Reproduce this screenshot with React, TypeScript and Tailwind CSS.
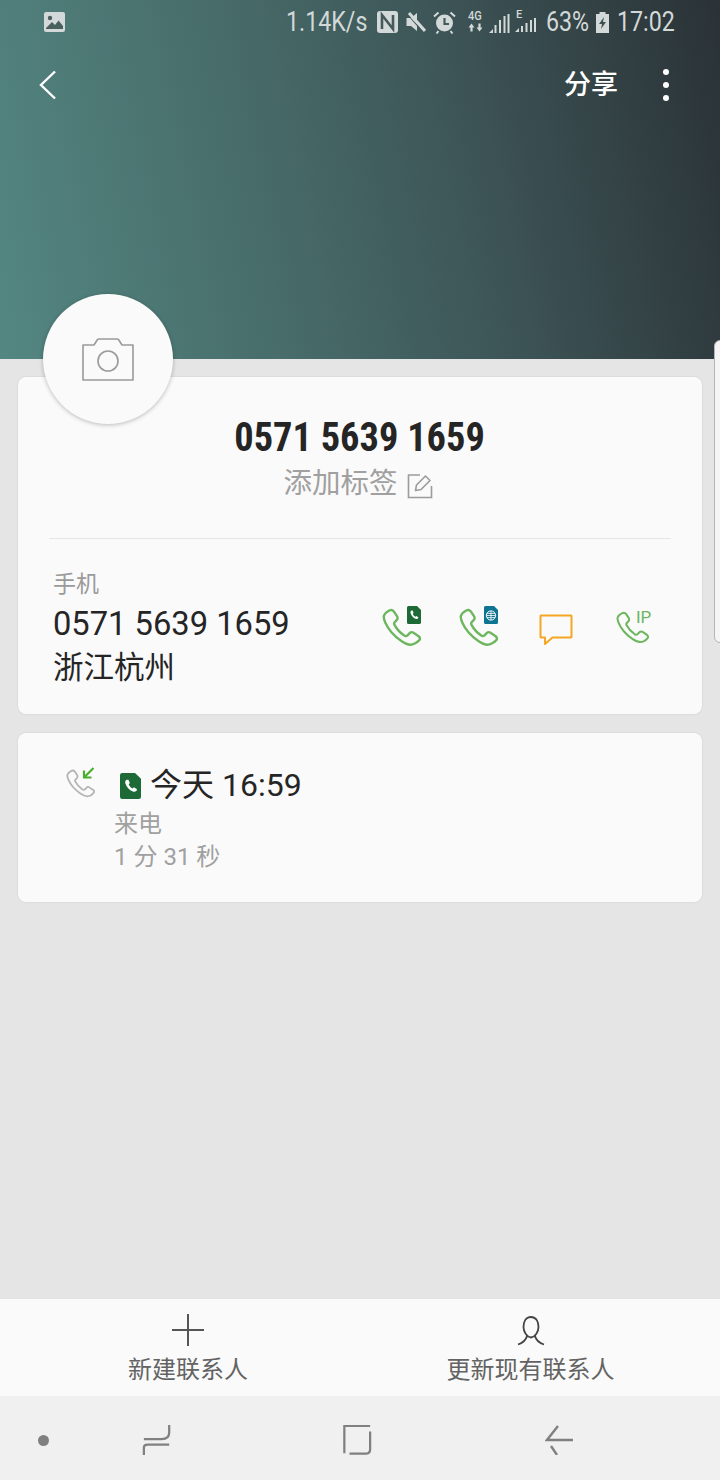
import React from "react";

const FONT = "font-['Roboto','Noto_Sans_CJK_SC',sans-serif]";

const PHONE =
  "M6.2 1.6 C4.6 2.4 2.2 4.4 1.6 6.2 C1 8.4 3.4 14.6 8 20 C13 25.8 20 30.4 24 30.6 C26.4 30.6 30 28.6 31.6 26.6 C32.6 25.2 32.2 24.4 31 23.4 L26.6 20.4 C25.4 19.6 24.4 19.8 23.4 20.8 L21.6 22.6 C20.6 23.4 19.8 23.4 18.8 22.8 C15.6 20.6 12.4 17.2 10.6 13.8 C10 12.8 10.2 12 11 11.2 L12.4 9.8 C13.4 8.8 13.4 7.8 12.8 6.6 L10 2.4 C9 1.2 7.6 0.9 6.2 1.6 Z";

function Phone({ size, color, width = 2 }: { size: number; color: string; width?: number }) {
  return (
    <svg width={size} height={size} viewBox="0 0 33 32" fill="none" className="block">
      <path d={PHONE} stroke={color} strokeWidth={width} strokeLinejoin="round" />
    </svg>
  );
}

// SIM-card shape with a clipped top-right corner
function Sim({ w, h, color, children }: { w: number; h: number; color: string; children?: React.ReactNode }) {
  return (
    <svg width={w} height={h} viewBox="0 0 14 18" preserveAspectRatio="none" className="block">
      <path d="M1.5 0 H10 L14 4 V16.5 A1.5 1.5 0 0 1 12.5 18 H1.5 A1.5 1.5 0 0 1 0 16.5 V1.5 A1.5 1.5 0 0 1 1.5 0 Z" fill={color} />
      {children}
    </svg>
  );
}

const SIM_PHONE = (
  <path d="M4.6 4.6 C3.6 5 3.2 6 3.6 7.2 C4.3 9.6 6.2 11.8 8.6 12.8 C9.8 13.2 10.8 12.9 11.2 12 L11.3 11.2 L9.3 9.9 L8.3 10.7 C7.2 10.2 6.2 9 5.8 7.8 L6.6 6.9 L5.6 4.6 Z" fill="#fff" />
);

function StatusIcons() {
  const ink = "#d3d9d8";
  return (
    <div className="flex items-center">
      {/* NFC */}
      <svg width="21" height="22" viewBox="0 0 21 22" className="block ml-[10px]">
        <rect width="21" height="22" rx="3" fill={ink} />
        <path d="M5 18 V4 L16 18 V4" fill="none" stroke="#465a5b" strokeWidth="2.6" />
      </svg>
      {/* Muted speaker */}
      <svg width="20" height="22" viewBox="0 0 20 22" className="block ml-[8px]">
        <path d="M0.5 7 H5 L11 2 V13 L5 7 Z M0.5 7 H4 L11 15 V20 L5 15 H0.5 Z" fill={ink} />
        <path d="M3 2 L19 20" stroke={ink} strokeWidth="3" />
      </svg>
      {/* Alarm clock */}
      <svg width="23" height="23" viewBox="0 0 23 23" className="block ml-[7px]">
        <circle cx="11.5" cy="12" r="8.5" fill={ink} />
        <path d="M11.5 7 V13 H16" fill="none" stroke="#465a5b" strokeWidth="2.2" />
        <path d="M1 5.5 L5.5 1.5 M22 5.5 L17.5 1.5 M5.5 20 L3.5 22.5 M17.5 20 L19.5 22.5" stroke={ink} strokeWidth="2" />
      </svg>
      {/* 4G and signal */}
      <div className="relative ml-[12px] h-[24px] w-[20px]">
        <span className="absolute left-0 top-[-1px] origin-top-left scale-x-[0.85] text-[13px] font-medium leading-[14px] text-[#d3d9d8]">4G</span>
        <svg width="16" height="10" viewBox="0 0 16 9" className="absolute left-0 top-[13px]">
          <path d="M3.5 0 L6.5 4 H4.6 V8 H2.4 V4 H0.5 Z M11.5 8 L8.5 4 H10.4 V0 H12.6 V4 H14.5 Z" fill={ink} />
        </svg>
      </div>
      <svg width="21" height="20" viewBox="0 0 21 20" className="ml-px mt-[2px] block">
        <path d="M0 20 L4 16 V20 Z" fill={ink} />
        <path d="M6.5 20 V12 M11 20 V7 M15.5 20 V3 M19.5 20 V1" stroke={ink} strokeWidth="2" />
      </svg>
      <div className="relative ml-[5px] h-[24px] w-[21px]">
        <span className="absolute left-[1px] top-[-1px] text-[11px] font-medium leading-[12px] text-[#d3d9d8]">E</span>
        <svg width="21" height="14" viewBox="0 0 21 14" className="absolute left-0 top-[8px]">
          <path d="M0 14 L4 10 V14 Z" fill={ink} />
          <path d="M7 14 V8 M11.5 14 V5 M16 14 V2 M20 14 V0" stroke={ink} strokeWidth="2" />
        </svg>
      </div>
    </div>
  );
}

function StatusText({ w, children, className = "" }: { w: number; children: React.ReactNode; className?: string }) {
  return (
    <span style={{ width: w }} className={`block origin-left scale-x-[0.86] whitespace-nowrap text-[27px] leading-none ${className}`}>
      {children}
    </span>
  );
}

export default function App() {
  return (
    <div className={`relative flex h-[1480px] w-[720px] flex-col overflow-hidden bg-[#e5e5e5] ${FONT}`}>
      {/* Coloured header with status bar and actions */}
      <header className="flex h-[359px] shrink-0 flex-col bg-[linear-gradient(78deg,#548782_0%,#466967_40%,#3d5456_65%,#2a3236_100%)]">
        <div className="flex h-[44px] items-center pl-[44px] pr-[46px] text-[#d3d9d8]">
          <svg width="21" height="20" viewBox="0 0 21 20" className="block">
            <rect width="21" height="20" rx="2" fill="#d3d9d8" />
            <circle cx="6" cy="6" r="2.2" fill="#49605f" />
            <path d="M2 16 L8 10 L11 13 L14.5 8.5 L19 14 V17 H2 Z" fill="#49605f" />
          </svg>
          <div className="flex-1" />
          <StatusText w={81}>1.14K/s</StatusText>
          <StatusIcons />
          <StatusText w={42} className="ml-[10px] scale-x-[0.84]">63%</StatusText>
          <svg width="15" height="21" viewBox="0 0 15 21" className="ml-[7px] block">
            <path d="M4.5 0 H10.5 V2 H14 V21 H1 V2 H4.5 Z" fill="#d3d9d8" />
            <path d="M9 5 L4 12 H7 L6 17 L11 10 H8 Z" fill="#3d5051" />
          </svg>
          <StatusText w={57} className="ml-[7px]">17:02</StatusText>
        </div>
        <div className="mt-[13px] flex h-[56px] items-center pl-[38px] pr-[51px]">
          <svg width="20" height="30" viewBox="0 0 20 30" fill="none" className="block">
            <path d="M17 1.5 L3 15 L17 28.5" stroke="#fff" strokeWidth="2.4" />
          </svg>
          <div className="flex-1" />
          <span className="text-[27px] font-medium leading-none text-white">分享</span>
          <div className="ml-[45px] flex flex-col gap-[7px]">
            <span className="size-[6px] rounded-full bg-white" />
            <span className="size-[6px] rounded-full bg-white" />
            <span className="size-[6px] rounded-full bg-white" />
          </div>
        </div>
      </header>

      {/* Contact cards */}
      <main className="flex flex-1 flex-col gap-[19px] px-[18px] pt-[18px]">
        <section className="h-[337px] rounded-[8px] bg-[#fafafa] shadow-[0_0_2px_rgba(0,0,0,0.12)]">
          <div className="flex h-[161px] flex-col items-center pt-[39px]">
            <h1 className="scale-x-[0.96] text-[40px] font-bold leading-[44px] text-[#252525] [font-stretch:condensed]">0571 5639 1659</h1>
            <div className="mt-[6px] flex items-center pr-[4px]">
              <span className="text-[28.5px] leading-[36px] text-[#a0a0a0]">添加标签</span>
              <svg width="26" height="26" viewBox="0 0 26 26" fill="none" className="ml-[9px] mt-[3px] block">
                <path d="M13 2 H1.5 V24.5 H24.5 V13" stroke="#9c9c9c" strokeWidth="1.6" />
                <path d="M8.5 17.5 L9.5 12 L18.5 3 L23 7.5 L14 16.5 Z" stroke="#9c9c9c" strokeWidth="1.6" strokeLinejoin="round" />
              </svg>
            </div>
          </div>
          <div className="mx-[31px] h-px bg-[#e6e6e6]" />
          <div className="flex pl-[35px] pr-[52px] pt-[31px]">
            <div className="flex-1">
              <div className="text-[23px] leading-[30px] text-[#9a9a9a]">手机</div>
              <div className="mt-[2px] text-[32.7px] leading-[44px] text-[#252525]">0571 5639 1659</div>
              <div className="text-[30.5px] leading-[44px] text-[#252525]">浙江杭州</div>
            </div>
            <div className="flex items-start pt-[36px]">
              <div className="relative h-[44px] w-[77px]">
                <div className="absolute left-0 top-[2px]"><Phone size={39} color="#6cb65d" /></div>
                <div className="absolute left-[25px] top-0"><Sim w={14} h={18} color="#1e6a36">{SIM_PHONE}</Sim></div>
              </div>
              <div className="relative h-[44px] w-[80px]">
                <div className="absolute left-0 top-[2px]"><Phone size={39} color="#6cb65d" /></div>
                <div className="absolute left-[25px] top-0">
                  <Sim w={14} h={18} color="#0f7491">
                    <circle cx="7" cy="9.5" r="4.6" fill="none" stroke="#fff" strokeWidth="1" />
                    <path d="M2.4 9.5 H11.6 M7 5 V14 M3 7.4 H11 M3 11.6 H11" stroke="#fff" strokeWidth="0.8" />
                  </Sim>
                </div>
              </div>
              <div className="h-[44px] w-[77px] pt-[8px]">
                <svg width="34" height="32" viewBox="0 0 34 32" fill="none" className="block">
                  <path d="M2 1.5 H32 A0.8 0.8 0 0 1 32.5 2 V23 A0.8 0.8 0 0 1 32 23.5 H13.5 L6 30 V23.5 H2 A0.8 0.8 0 0 1 1.5 23 V2 A0.8 0.8 0 0 1 2 1.5 Z" stroke="#f5a623" strokeWidth="2" strokeLinejoin="round" />
                </svg>
              </div>
              <div className="relative h-[44px] w-[34px]">
                <div className="absolute left-0 top-[5px]"><Phone size={33} color="#6cb65d" /></div>
                <span className="absolute left-[20px] top-[1px] text-[17px] leading-[20px] text-[#6cb65d]">IP</span>
              </div>
            </div>
          </div>
        </section>

        <section className="flex h-[169px] rounded-[8px] bg-[#fafafa] pl-[48px] pt-[34px] shadow-[0_0_2px_rgba(0,0,0,0.12)]">
          <div className="relative h-[30px] w-[48px] pt-[2px]">
            <Phone size={29} color="#b4b4b4" />
            <svg width="13" height="13" viewBox="0 0 13 13" fill="none" className="absolute left-[16px] top-0">
              <path d="M11.5 1 L2.5 10 M2 3.5 V10.5 H9.5" stroke="#4cae2f" strokeWidth="2.2" />
            </svg>
          </div>
          <div>
            <div className="flex h-[38px] items-center pl-[6px]">
              <Sim w={21} h={26} color="#1e6a36">{SIM_PHONE}</Sim>
              <span className="ml-[9px] -translate-y-px text-[32px] leading-[38px] text-[#252525]">今天 16:59</span>
            </div>
            <div className="mt-[3px] text-[24px] leading-[32px] text-[#a0a0a0]">来电</div>
            <div className="mt-px text-[24px] leading-[33px] text-[#a0a0a0]">1 分 31 秒</div>
          </div>
        </section>
      </main>

      {/* Bottom actions */}
      <div className="grid h-[97px] shrink-0 grid-cols-2 bg-[#fafafa]">
        <button className="flex flex-col items-center pl-[16px] pt-[15px]">
          <svg width="32" height="32" viewBox="0 0 32 32" className="block">
            <path d="M16 0 V32 M0 16 H32" stroke="#555" strokeWidth="2" />
          </svg>
          <span className="mt-[8px] text-[24px] leading-[32px] text-[#636363]">新建联系人</span>
        </button>
        <button className="flex flex-col items-center pr-[19px] pt-[17px]">
          <svg width="28" height="30" viewBox="0 0 28 30" fill="none" className="block">
            <path d="M14 1 C8.5 1 6.5 6 6.5 11 C6.5 16 10 21 14 21.5 C18 21 21.5 16 21.5 11 C21.5 6 19.5 1 14 1 Z M10 20 C9 24 5.5 27 1 28.5 M18 20 C19 24 22.5 27 27 28.5" stroke="#444" strokeWidth="1.8" />
          </svg>
          <span className="mt-[8px] text-[24px] leading-[32px] text-[#636363]">更新现有联系人</span>
        </button>
      </div>

      {/* Navigation bar */}
      <nav className="relative h-[84px] shrink-0 bg-[#f0f0f0]">
        <div className="flex h-full items-center pl-[38px] pt-[4px]">
          <span className="size-[11px] rounded-full bg-[#808080]" />
          <svg width="30" height="30" viewBox="0 0 30 32" fill="none" className="ml-[93px] block">
            <path d="M1 15 H20 Q28 15 28 8 V0 M1 32 V24 Q1 21 5 21 H28" stroke="#808080" strokeWidth="2.4" />
          </svg>
          <svg width="30" height="30" viewBox="0 0 30 32" fill="none" className="ml-[170px] block">
            <path d="M29 1 H1.5 V30 M7 30.5 H24 Q29 30.5 29 26 V7" stroke="#808080" strokeWidth="2.4" />
          </svg>
          <svg width="28" height="30" viewBox="0 0 28 30" fill="none" className="ml-[173px] block">
            <path d="M13 1 L2 15 H28 M6 21 L12 30" stroke="#808080" strokeWidth="2.4" />
          </svg>
        </div>
      </nav>

      {/* Floating camera avatar */}
      <div className="absolute left-[43px] top-[294px] flex size-[130px] items-center justify-center rounded-full bg-[#fafafa] shadow-[0_1px_4px_rgba(0,0,0,0.25)]">
        <svg width="52" height="43" viewBox="0 0 52 43" fill="none" className="block">
          <path d="M1 7 H12 L15.5 1.5 Q16 1 17 1 H35 Q36 1 36.5 1.5 L40 7 H51 V42 H1 Z" stroke="#9a9a9a" strokeWidth="1.6" strokeLinejoin="round" />
          <circle cx="26" cy="23" r="10" stroke="#9a9a9a" strokeWidth="1.6" />
        </svg>
      </div>

      {/* Edge panel handle */}
      <div className="absolute right-[-8px] top-[340px] h-[303px] w-[14px] rounded-l-[6px] border border-[#b5b5b5] bg-[#f5f5f5]" />
    </div>
  );
}
